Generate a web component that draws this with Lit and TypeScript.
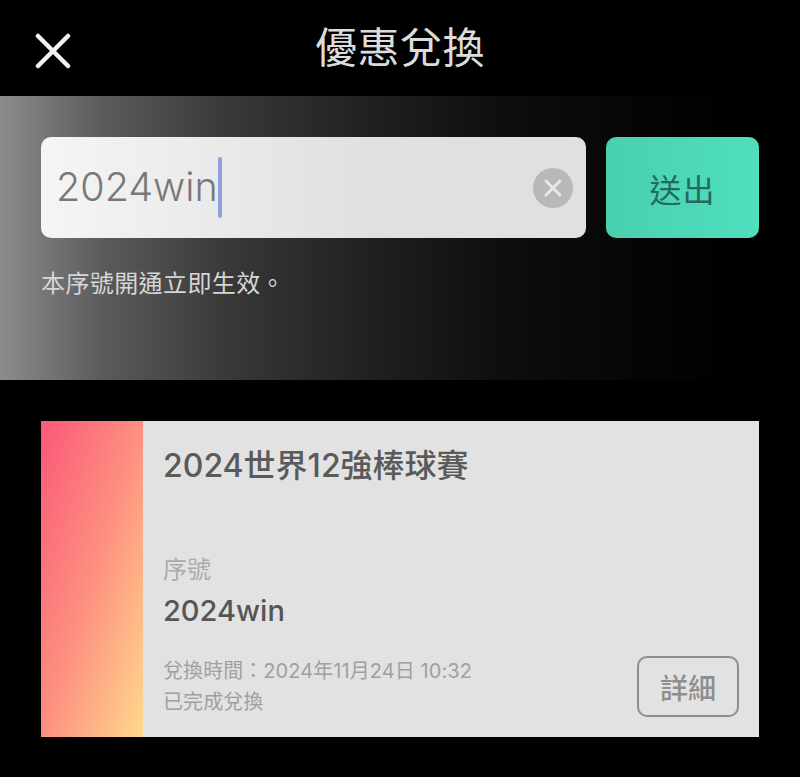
import { LitElement, html, css } from "lit";
import { customElement } from "lit/decorators.js";

@customElement("app-root")
export class AppRoot extends LitElement {
  static styles = css`
    :host {
      display: block;
      width: 800px;
      height: 777px;
      background: #000;
      overflow: hidden;
      font-family: Inter, "Noto Sans CJK TC", sans-serif;
    }
    .header {
      height: 96px;
      box-sizing: border-box;
      padding-bottom: 6px;
      display: flex;
      align-items: center;
      justify-content: center;
      position: relative;
    }
    .close {
      position: absolute;
      left: 35px;
      top: 33px;
      width: 36px;
      height: 36px;
    }
    .title {
      color: #dcdcdc;
      font-size: 42px;
      letter-spacing: 0.5px;
      line-height: 1;
      font-family: "Noto Sans CJK TC", sans-serif;
      font-weight: 400;
    }
    .band {
      height: 284px;
      box-sizing: border-box;
      padding: 41px 41px 0;
      background: linear-gradient(90deg, #8c8c8c 0%, #5a5a5a 13%, #363636 30%, #1e1e1e 48%, #0e0e0e 63%, #050505 80%, #000 92%);
    }
    .row {
      display: flex;
      gap: 20px;
      height: 101px;
    }
    .input {
      flex: 1;
      border-radius: 10px;
      background: linear-gradient(90deg, #f5f5f5, #e0e0e0 60%);
      display: flex;
      align-items: center;
      padding: 0 13px 0 15px;
      position: relative;
    }
    .value {
      color: #787878;
      font-size: 39.5px;
      font-weight: 300;
      line-height: 1;
    }
    .caret {
      width: 4px;
      height: 61px;
      background: #8f9fe0;
      border-radius: 2px;
    }
    .clear {
      margin-left: auto;
      width: 40px;
      height: 40px;
    }
    .submit {
      width: 153px;
      border-radius: 10px;
      background: linear-gradient(90deg, #48d0b0, #50dfbe);
      color: #256a5c;
      font-size: 32px;
      font-family: "Noto Sans CJK TC", sans-serif;
      font-weight: 400;
      display: flex;
      align-items: center;
      justify-content: center;
      letter-spacing: 1px;
    }
    .hint {
      margin-top: 29px;
      color: #d6d6d6;
      font-size: 24px;
      letter-spacing: 0.4px;
      line-height: 30px;
      font-family: "Noto Sans CJK TC", sans-serif;
      font-weight: 400;
    }
    .card {
      margin: 41px 41px 0;
      height: 316px;
      display: flex;
      background: #e2e2e2;
    }
    .strip {
      width: 102px;
      background: linear-gradient(to bottom right, #fb5878 0%, #fd9080 50%, #ffd88c 100%);
    }
    .body {
      flex: 1;
      box-sizing: border-box;
      padding: 23px 20px 19px;
      display: flex;
      flex-direction: column;
    }
    .name {
      color: #5a5a5a;
      font-size: 32px;
      line-height: 44px;
      font-weight: 500;
    }
    .label {
      margin-top: 65px;
      color: #aaa;
      font-size: 24px;
      line-height: 34px;
    }
    .code {
      margin-top: 5px;
      color: #555;
      font-size: 29px;
      line-height: 38px;
      font-weight: 500;
    }
    .foot {
      margin-top: auto;
      display: flex;
      justify-content: space-between;
      align-items: flex-end;
    }
    .meta {
      color: #a0a0a0;
      font-size: 20px;
      line-height: 31px;
      letter-spacing: 0.07px;
    }
    .detail {
      width: 102px;
      height: 61px;
      margin-bottom: 1px;
      box-sizing: border-box;
      border: 2px solid #8e8e8e;
      border-radius: 10px;
      color: #8e8e8e;
      font-size: 28px;
      display: flex;
      align-items: center;
      justify-content: center;
      font-weight: 500;
    }
  `;

  render() {
    return html`
      <div class="header">
        <svg class="close" viewBox="0 0 36 36" fill="none" stroke="#f2f2f2" stroke-width="4.5" stroke-linecap="round">
          <path d="M3 3 L33 33 M33 3 L3 33" />
        </svg>
        <div class="title">優惠兌換</div>
      </div>
      <div class="band">
        <div class="row">
          <div class="input">
            <span class="value">2024win</span><span class="caret"></span>
            <svg class="clear" viewBox="0 0 40 40">
              <circle cx="20" cy="20" r="20" fill="#b8b8b8" />
              <path d="M13 13 L27 27 M27 13 L13 27" stroke="#e8e8e8" stroke-width="3" stroke-linecap="round" />
            </svg>
          </div>
          <div class="submit">送出</div>
        </div>
        <div class="hint">本序號開通立即生效。</div>
      </div>
      <div class="card">
        <div class="strip"></div>
        <div class="body">
          <div class="name">2024世界12強棒球賽</div>
          <div class="label">序號</div>
          <div class="code">2024win</div>
          <div class="foot">
            <div class="meta">兌換時間：2024年11月24日 10:32<br />已完成兌換</div>
            <div class="detail">詳細</div>
          </div>
        </div>
      </div>
    `;
  }
}
